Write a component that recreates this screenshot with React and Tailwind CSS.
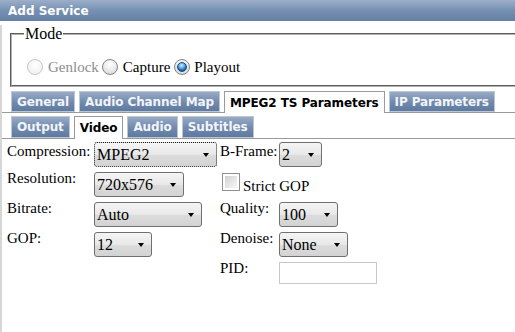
import React from "react";

// "Add Service" dialog — Mode fieldset, two rows of tabs, video parameters form.

function Radio({ checked, disabled }) {
  return (
    <span
      className={`w-4 h-4 shrink-0 rounded-full border flex items-center justify-center ${
        disabled
          ? "border-[#c6c6c6] bg-[radial-gradient(circle_at_50%_35%,#ffffff,#ededed)]"
          : "border-[#858585] bg-[radial-gradient(circle_at_50%_30%,#ffffff,#f0f0f0_40%,#cfcfcf)]"
      }`}
    >
      {checked && (
        <span className="w-[10px] h-[10px] rounded-full border border-[#1c477c] bg-[radial-gradient(circle_at_45%_30%,#d6f1ff,#58a8e4_40%,#1d64ad_70%,#0b3a70)]" />
      )}
    </span>
  );
}

function Tab({ label, active, row }) {
  if (active) {
    return (
      <div
        className={`${row === 1 ? "h-[22px]" : "h-[23px]"} -mb-px px-[5px] flex items-center border border-b-0 border-[#9a9a9a] bg-white text-black`}
      >
        {label}
      </div>
    );
  }
  return (
    <div
      className={`${row === 1 ? "h-[21px]" : "h-[22px]"} px-[5px] flex items-center border border-[#bcc7d6] bg-[linear-gradient(to_bottom,#98abc6,#7189ad_55%,#5f7aa0)] text-[#f2f5f9]`}
    >
      {label}
    </div>
  );
}

function Select({ value, w, focus }) {
  return (
    <div
      className={`${w} h-[25px] flex items-center justify-between rounded-[3px] border pl-[2px] pr-[7px] text-[16px] leading-[18px] bg-[linear-gradient(to_bottom,#f5f5f5,#e8e8e8_50%,#dcdcdc_52%,#d3d3d3)] ${
        focus ? "border-dotted border-[#222]" : "border-[#707070]"
      }`}
    >
      <span>{value}</span>
      <span className="w-0 h-0 border-l-[3px] border-r-[3px] border-t-[4px] border-l-transparent border-r-transparent border-t-black" />
    </div>
  );
}

export default function App() {
  return (
    <div className="w-[515px] h-[332px] overflow-hidden bg-white text-black font-['Liberation_Serif','Times_New_Roman',serif]">
      <div className="h-[21px] pl-[8px] pt-[2px] leading-[19px] bg-[linear-gradient(to_bottom,#9cafca,#7690b3_50%,#6580a6)] text-white text-[12px] font-bold font-['DejaVu_Sans',Verdana,sans-serif]">
        Add Service
      </div>

      <div className="h-[311px] border-l-2 border-[#d6d6d6]">
        <fieldset className="ml-[8px] mt-[4px] w-[520px] border-2 [border-style:groove] border-[#b0b0b0] pl-[12px] pb-[7px]">
          <legend className="px-[1px] text-[16px] leading-[18px]">Mode</legend>
          <div className="mt-[13px] ml-[3px] h-[22px] flex items-center text-[15px] leading-[18px]">
            <Radio disabled />
            <span className="ml-[5px] text-[#8d8d8d]">Genlock</span>
            <span className="ml-[3px]">
              <Radio />
            </span>
            <span className="ml-[5px]">Capture</span>
            <span className="ml-[4px]">
              <Radio checked />
            </span>
            <span className="ml-[4px]">Playout</span>
          </div>
        </fieldset>

        <div className="font-['DejaVu_Sans',Verdana,sans-serif] text-[12px] font-bold tracking-[-0.1px]">
          <div className="mt-[4px] pl-[9px] flex items-end gap-[4px] border-b border-[#9a9a9a]">
            <Tab row={1} label="General" />
            <Tab row={1} label="Audio Channel Map" />
            <Tab row={1} label="MPEG2 TS Parameters" active />
            <Tab row={1} label="IP Parameters" />
          </div>
          <div className="mt-[3px] pl-[9px] flex items-end gap-[4px] border-b border-[#9a9a9a]">
            <Tab row={2} label="Output" />
            <Tab row={2} label="Video" active />
            <Tab row={2} label="Audio" />
            <Tab row={2} label="Subtitles" />
          </div>
        </div>

        <div className="mt-[3px] pl-[5px] grid grid-cols-[87px_126px_59px_1fr] grid-rows-[27px_30px_30px_30px_30px] text-[15px] leading-[18px]">
          <div>Compression:</div>
          <div>
            <Select value="MPEG2" w="w-[123px]" focus />
          </div>
          <div>B-Frame:</div>
          <div>
            <Select value="2" w="w-[43px]" />
          </div>

          <div>Resolution:</div>
          <div className="pt-[3px]">
            <Select value="720x576" w="w-[90px]" />
          </div>
          <div className="col-span-2 flex items-start">
            <span className="mt-[4px] ml-[2px] w-[18px] h-[18px] border border-[#8f8f8f] p-[2px] bg-white">
              <span className="block w-full h-full bg-[linear-gradient(135deg,#d0d0d0,#e9e9e9_60%,#f7f7f7)]" />
            </span>
            <span className="ml-[3px] mt-[8px]">Strict GOP</span>
          </div>

          <div>Bitrate:</div>
          <div className="pt-[3px]">
            <Select value="Auto" w="w-[108px]" />
          </div>
          <div>Quality:</div>
          <div className="pt-[3px]">
            <Select value="100" w="w-[59px]" />
          </div>

          <div>GOP:</div>
          <div className="pt-[3px]">
            <Select value="12" w="w-[58px]" />
          </div>
          <div>Denoise:</div>
          <div className="pt-[3px]">
            <Select value="None" w="w-[69px]" />
          </div>

          <div />
          <div />
          <div>PID:</div>
          <div className="pt-[3px]">
            <input
              type="text"
              className="block w-[98px] h-[22px] border border-[#c8c8c8] bg-white outline-none"
            />
          </div>
        </div>
      </div>
    </div>
  );
}
